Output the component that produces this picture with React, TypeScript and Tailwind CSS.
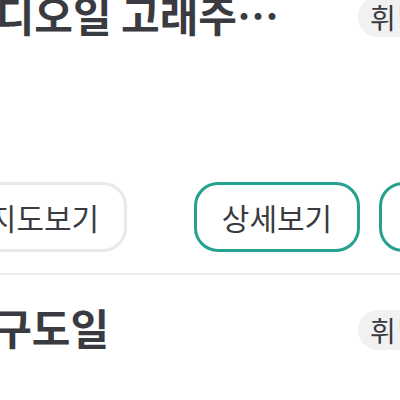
const font = "font-['Noto_Sans_CJK_KR','Noto_Sans',sans-serif]";

const Badge = () => (
    <span className="shrink-0 mt-[13px] rounded-full bg-[#f1f1f3] px-[12px] h-[40px] flex items-center text-[28px] tracking-[2px] text-[#3a3b40]">
        휘발유
    </span>
);

const Item = ({ title, indent }: { title: string; indent: string }) => {
    return (
        <div className="flex flex-col">
            <div className="flex items-start h-[52px]">
                <div className={`mt-[4px] w-[397px] shrink-0 truncate text-[42px] font-bold text-[#3a3b40] leading-[52px] ${indent}`}>
                    {title}
                </div>
                <Badge />
            </div>
            <div className="h-[146px]" />
            <div className="flex items-center gap-[19px]">
                <button className="shrink-0 mr-[48px] h-[70px] w-[166px] rounded-[24px] border-[3px] border-[#e9e9e9] text-[30px] text-[#3a3b40]">
                    지도보기
                </button>
                <button className="shrink-0 h-[70px] w-[166px] rounded-[24px] border-[3px] border-[#26a08f] text-[30px] text-[#3a3b40]">
                    상세보기
                </button>
                <button className="shrink-0 h-[70px] w-[166px] rounded-[24px] border-[3px] border-[#26a08f] text-[30px] text-[#3a3b40]">
                    길찾기
                </button>
            </div>
            <div className="mt-[21px] h-[2px] bg-[#ececec]" />
            <div className="h-[22px]" />
        </div>
    );
};

export default function App() {
    return (
        <div className={`w-[400px] h-[400px] overflow-hidden bg-white ${font}`}>
            <div className="-mt-[16px] -ml-[39px] w-[797px] flex flex-col">
                <Item title="라디오일 고래주…" indent="-indent-[4px]" />
                <Item title="S구도일" indent="indent-[6px]" />
            </div>
        </div>
    );
}
